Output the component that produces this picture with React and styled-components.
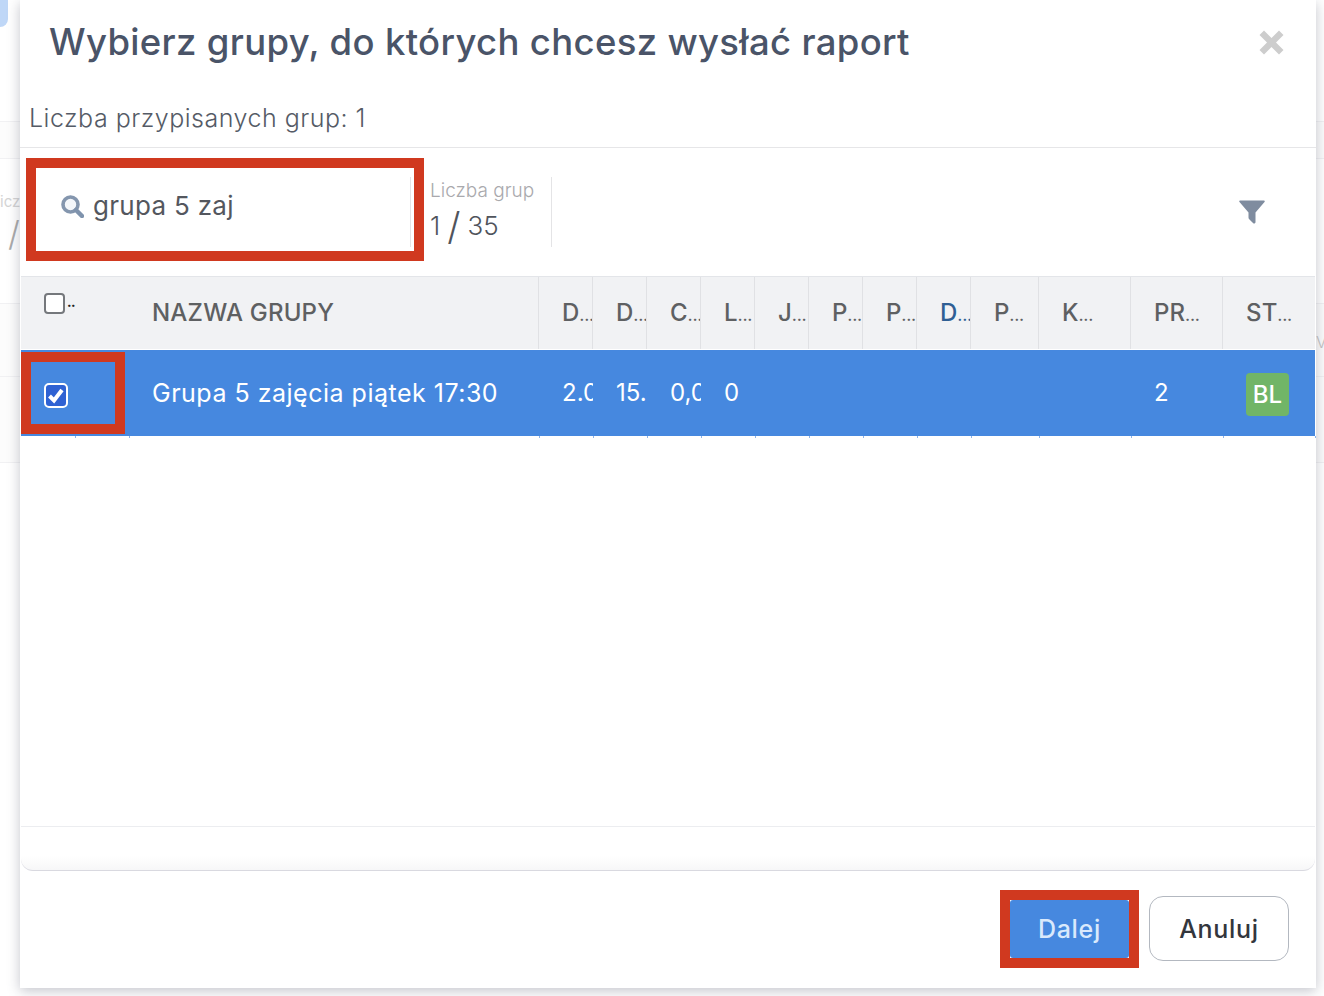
import React from "react";
import styled, { createGlobalStyle } from "styled-components";

const Global = createGlobalStyle`
  html, body { margin: 0; padding: 0; background: #fff; }
  body { font-family: Inter, "Noto Sans", sans-serif; }
`;

const Page = styled.div`
  position: relative;
  width: 1324px;
  height: 996px;
  overflow: hidden;
  background: #fff;
`;

const BackBlue = styled.div`
  width: 8px;
  height: 27px;
  background: #bfd7f7;
  border-bottom-right-radius: 8px;
`;

const BackBand = styled.div`
  position: absolute;
  left: 0;
  right: 0;
  top: ${(p) => p.$top}px;
  height: ${(p) => p.$h}px;
  background: #fcfcfc;
  border-top: 1px solid #f1f1f3;
  border-bottom: 1px solid #f1f1f3;
`;

const BackText = styled.div`
  position: absolute;
  left: 0;
  top: 192px;
  font-size: 15px;
  color: #d4d4d4;
  line-height: 20px;
`;

const BackSlash = styled.div`
  position: absolute;
  left: 8px;
  top: 214px;
  font-size: 34px;
  line-height: 40px;
  font-weight: 300;
  color: #aaa;
`;

const BackMark = styled.div`
  position: absolute;
  left: 1316px;
  top: 330px;
  font-size: 16px;
  line-height: 24px;
  font-weight: 300;
  color: #c4c4c4;
`;

const Modal = styled.div`
  position: absolute;
  left: 20px;
  top: 0;
  width: 1296px;
  height: 988px;
  background: #fff;
  display: flex;
  flex-direction: column;
  box-shadow: 0 3px 12px rgba(70, 75, 95, 0.32);
`;

const Header = styled.div`
  height: 88px;
  display: flex;
  align-items: flex-start;
  justify-content: space-between;
  padding: 18px 32px 0 29px;
  box-sizing: border-box;
`;

const Title = styled.h1`
  margin: 0;
  font-size: 36.5px;
  line-height: 48px;
  font-weight: 500;
  letter-spacing: 0.33px;
  color: #4a5468;
  white-space: nowrap;
`;

const CloseIcon = styled.svg`
  width: 25px;
  height: 25px;
  margin-top: 12px;
  fill: #cdcdcd;
`;

const Assigned = styled.div`
  height: 60px;
  box-sizing: border-box;
  padding: 14px 0 0 9px;
  font-size: 25px;
  line-height: 32px;
  font-weight: 300;
  letter-spacing: 0.5px;
  color: #555b66;
  border-bottom: 1px solid #e6e6e8;
  white-space: nowrap;
`;

const Toolbar = styled.div`
  height: 128px;
  box-sizing: border-box;
  display: flex;
  align-items: center;
`;

const Search = styled.div`
  width: 391px;
  height: 70px;
  margin-top: -1px;
  box-sizing: border-box;
  border-right: 1px solid #e4e4e6;
  display: flex;
  align-items: flex-start;
  gap: 9px;
  padding: 14px 0 0 41px;
`;

const SearchIcon = styled.svg`
  width: 23px;
  height: 23px;
  margin-top: 4px;
  flex: none;
`;

const SearchText = styled.span`
  font-size: 26px;
  line-height: 30px;
  font-weight: 400;
  letter-spacing: 0.3px;
  color: #54575e;
  white-space: nowrap;
`;

const Counter = styled.div`
  width: 141px;
  height: 70px;
  margin-top: -1px;
  box-sizing: border-box;
  border-right: 1px solid #e4e4e6;
  padding: 2px 0 0 19px;
  white-space: nowrap;
`;

const CounterLabel = styled.div`
  font-size: 19px;
  line-height: 24px;
  font-weight: 300;
  color: #a9a9ad;
`;

const CounterValue = styled.div`
  display: flex;
  align-items: center;
  gap: 7px;
  height: 38px;
  margin-top: 4px;
  font-size: 26px;
  font-weight: 300;
  color: #50545c;
`;

const Slash = styled.span`
  font-size: 38px;
  font-weight: 300;
  line-height: 38px;
`;

const FilterIcon = styled.svg`
  width: 26px;
  height: 24px;
  margin-left: auto;
  margin-right: 51px;
  fill: #7f8c9f;
`;

const TableWrap = styled.div`
  flex: 1;
  margin: 0 1px;
  display: flex;
  flex-direction: column;
  border-top: 1px solid #e3e5e9;
  border-bottom: 1px solid #d9d9e0;
  border-radius: 0 0 12px 12px;
  background: linear-gradient(to bottom, #fff calc(100% - 14px), #f7f7f8 100%);
`;

const columns =
  "54px 54px 410px 54px 54px 54px 54px 54px 54px 54px 54px 68px 92px 92px 1fr";

const HeadRow = styled.div`
  display: grid;
  grid-template-columns: ${columns};
  height: 72px;
  background: #f1f2f4;
`;

const HeadCell = styled.div`
  box-sizing: border-box;
  padding: 21px 0 0 ${(p) => p.$pad ?? 23}px;
  border-right: ${(p) => (p.$plain ? "none" : "1px solid #e0e1e4")};
  font-size: 24px;
  line-height: 30px;
  font-weight: 500;
  letter-spacing: 0.2px;
  color: ${(p) => (p.$accent ? "#2f5f94" : "#5e6062")};
  white-space: nowrap;
  overflow: hidden;
`;

const Dots = styled.span`
  font-size: 14px;
  font-weight: 700;
`;

const HeadSelect = styled.div`
  grid-column: span 2;
  box-sizing: border-box;
  display: flex;
  align-items: flex-start;
  padding: 16px 0 0 23px;
`;

const HeadCheck = styled.span`
  width: 21px;
  height: 21px;
  box-sizing: border-box;
  background: #fff;
  border: 2px solid #75787c;
  border-radius: 4px;
`;

const MiniDots = styled.span`
  font-size: 13px;
  line-height: 19px;
  margin-left: 2px;
  font-weight: 800;
  letter-spacing: -0.5px;
  color: #222;
`;

const DataRow = styled.div`
  display: grid;
  grid-template-columns: ${columns};
  height: 86px;
  margin-top: 1px;
  background: #4688df;
`;

const DataCell = styled.div`
  position: relative;
  box-sizing: border-box;
  padding: 28px 0 0 ${(p) => p.$pad ?? 23}px;
  font-size: ${(p) => (p.$wide ? "25px" : "24px")};
  line-height: 30px;
  font-weight: 400;
  letter-spacing: ${(p) => (p.$wide ? "0.5px" : "0")};
  color: #fff;
  white-space: nowrap;
  &::after {
    content: "";
    position: absolute;
    right: -1px;
    bottom: -2px;
    width: 1px;
    height: 2px;
    background: #8db4ea;
  }
`;

const Clip = styled.div`
  overflow: hidden;
`;

const RowCheck = styled.span`
  display: block;
  width: 24px;
  height: 25px;
  margin-top: 5px;
  box-sizing: border-box;
  border: 2px solid #fff;
  border-radius: 5px;
  background: #2f62d3;
`;

const CheckSvg = styled.svg`
  display: block;
  width: 20px;
  height: 21px;
`;

const Badge = styled.span`
  display: flex;
  align-items: center;
  justify-content: center;
  width: 43px;
  height: 43px;
  margin-top: -5px;
  border-radius: 4px;
  background: #71b567;
  font-size: 24px;
  font-weight: 500;
  color: #fff;
`;

const Spacer = styled.div`
  flex: 1;
`;

const TableFoot = styled.div`
  height: 43px;
  border-top: 1px solid #ecedf0;
`;

const Footer = styled.div`
  height: 117px;
  box-sizing: border-box;
  display: flex;
  justify-content: flex-end;
  align-items: flex-start;
  gap: 20px;
  padding: 25px 27px 0 0;
`;

const Button = styled.button`
  width: ${(p) => (p.$primary ? "119px" : "140px")};
  height: ${(p) => (p.$primary ? "58px" : "65px")};
  margin-top: ${(p) => (p.$primary ? "4px" : "0")};
  border-radius: ${(p) => (p.$primary ? "3px" : "14px")};
  border: ${(p) => (p.$primary ? "none" : "1px solid #b3b8c0")};
  background: ${(p) => (p.$primary ? "#4688df" : "#fff")};
  color: ${(p) => (p.$primary ? "#d9e9fc" : "#33363d")};
  font-family: inherit;
  font-size: 25px;
  font-weight: 500;
  letter-spacing: 0.7px;
  padding: 0;
`;

const Marker = styled.div`
  position: absolute;
  left: ${(p) => p.$x}px;
  top: ${(p) => p.$y}px;
  width: ${(p) => p.$w}px;
  height: ${(p) => p.$h}px;
  box-sizing: border-box;
  border: 10px solid #d0391f;
  pointer-events: none;
`;

const heads = [
  ["D"], ["D"], ["C"], ["L"], ["J"], ["P"], ["P"], ["D", true], ["P"], ["K"], ["PR"], ["ST"],
];

const cells = ["2.09.2022", "15.06.2023", "0,00", "0", "", "", "", "", "", "", "2"];

export default function App() {
  return (
    <Page>
      <Global />
      <BackBlue />
      <BackBand $top={121} $h={36} />
      <BackBand $top={303} $h={72} />
      <BackBand $top={376} $h={85} />
      <BackText>icz</BackText>
      <BackSlash>/</BackSlash>
      <BackMark>V</BackMark>
      <Modal>
        <Header>
          <Title>Wybierz grupy, do których chcesz wysłać raport</Title>
          <CloseIcon viewBox="0 0 25 25">
            <path d="M5 0.5 12.5 8 20 0.5 24.5 5 17 12.5 24.5 20 20 24.5 12.5 17 5 24.5 0.5 20 8 12.5 0.5 5Z" />
          </CloseIcon>
        </Header>
        <Assigned>Liczba przypisanych grup: 1</Assigned>
        <Toolbar>
          <Search>
            <SearchIcon viewBox="0 0 23 23">
              <circle cx="9.5" cy="9.5" r="7.5" fill="#f3f6fa" stroke="#8496ae" strokeWidth="3.6" />
              <path d="M15 15 21 21" stroke="#7f93ad" strokeWidth="4.5" strokeLinecap="round" />
            </SearchIcon>
            <SearchText>grupa 5 zaj</SearchText>
          </Search>
          <Counter>
            <CounterLabel>Liczba grup</CounterLabel>
            <CounterValue>
              1 <Slash>/</Slash> 35
            </CounterValue>
          </Counter>
          <FilterIcon viewBox="0 0 26 24">
            <path d="M1 0.5H25C25.8 0.5 26 1.4 25.5 2L16.5 12.5V22C16.5 23.5 15 24 14 23L10.5 19.5C9.9 19 9.5 18.4 9.5 17.5V12.5L0.5 2C0 1.4 0.2 0.5 1 0.5Z" />
          </FilterIcon>
        </Toolbar>
        <TableWrap>
          <HeadRow>
            <HeadSelect>
              <HeadCheck />
              <MiniDots>..</MiniDots>
            </HeadSelect>
            <HeadCell>NAZWA GRUPY</HeadCell>
            {heads.map(([label, accent], i) => (
              <HeadCell key={i} $accent={accent} $plain={i === heads.length - 1}>
                {label}
                <Dots>...</Dots>
              </HeadCell>
            ))}
          </HeadRow>
          <DataRow>
            <DataCell>
              <RowCheck>
                <CheckSvg viewBox="0 0 20 21">
                  <path d="M3.5 11 8 15.5 16 5" fill="none" stroke="#fff" strokeWidth="4" />
                </CheckSvg>
              </RowCheck>
            </DataCell>
            <DataCell />
            <DataCell $wide>Grupa 5 zajęcia piątek 17:30</DataCell>
            {cells.map((c, i) => (
              <DataCell key={i}>
                <Clip>{c || "\u00a0"}</Clip>
              </DataCell>
            ))}
            <DataCell>
              <Badge>BL</Badge>
            </DataCell>
          </DataRow>
          <Spacer />
          <TableFoot />
        </TableWrap>
        <Footer>
          <Button $primary>Dalej</Button>
          <Button>Anuluj</Button>
        </Footer>
      </Modal>
      <Marker $x={26} $y={158} $w={398} $h={103} />
      <Marker $x={21} $y={352} $w={104} $h={82} />
      <Marker $x={1000} $y={890} $w={139} $h={78} />
    </Page>
  );
}
